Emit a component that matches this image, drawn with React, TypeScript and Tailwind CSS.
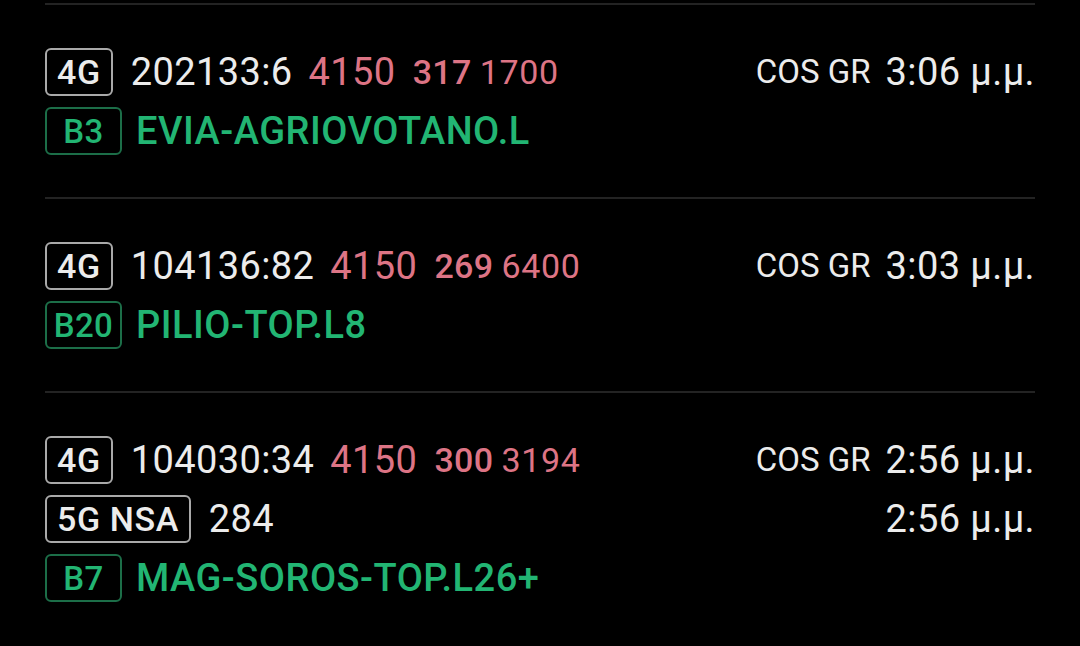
const font = { fontFamily: 'Roboto, "Noto Sans", sans-serif' };

type Cell = {
  ci: string;
  earfcn: string;
  pci: string;
  tac: string;
  band: string;
  name: string;
  time: string;
  nr?: { pci: string };
};

const cells: Cell[] = [
  { ci: '202133:6', earfcn: '4150', pci: '317', tac: '1700', band: 'B3', name: 'EVIA-AGRIOVOTANO.L', time: '3:06 μ.μ.' },
  { ci: '104136:82', earfcn: '4150', pci: '269', tac: '6400', band: 'B20', name: 'PILIO-TOP.L8', time: '3:03 μ.μ.' },
  { ci: '104030:34', earfcn: '4150', pci: '300', tac: '3194', band: 'B7', name: 'MAG-SOROS-TOP.L26+', time: '2:56 μ.μ.', nr: { pci: '284' } },
];

function TechBadge({ label }: { label: string }) {
  return (
    <div className="h-12 px-[10px] flex items-center rounded-[6px] border-2 border-[#a9a9a9] text-[34px] tracking-[0.6px] font-medium text-[#ececec] leading-none">
      {label}
    </div>
  );
}

function BandBadge({ label }: { label: string }) {
  return (
    <div className="h-12 w-[77px] flex items-center justify-center rounded-[6px] border-2 border-[#1c6e48] text-[33px] tracking-[0.4px] font-medium text-[#22b573] leading-none">
      {label}
    </div>
  );
}

function CellEntry({ c }: { c: Cell }) {
  return (
    <div className="pt-[43px] pb-[42px] flex flex-col gap-[11px]">
      <div className="h-12 flex items-center justify-between">
        <div className="flex items-center">
          <TechBadge label="4G" />
          <span className="ml-[18px] text-[38px] tracking-[0.4px] text-[#ececec]">{c.ci}</span>
          <span className="ml-[16px] text-[38px] tracking-[0.4px] text-[#dd7485]">{c.earfcn}</span>
          <span className="ml-[17px] text-[34px] tracking-[0.4px] font-medium text-[#dd7485]">{c.pci}</span>
          <span className="ml-[8px] text-[34px] tracking-[0.6px] text-[#dd7485]">{c.tac}</span>
        </div>
        <div className="flex items-center">
          <span className="text-[33px] text-[#ececec]">COS GR</span>
          <span className="ml-[15px] text-[38px] tracking-[0.4px] text-[#ececec]">{c.time}</span>
        </div>
      </div>
      {c.nr && (
        <div className="h-12 flex items-center justify-between">
          <div className="flex items-center">
            <TechBadge label="5G NSA" />
            <span className="ml-[18px] text-[38px] tracking-[0.4px] text-[#ececec]">{c.nr.pci}</span>
          </div>
          <span className="text-[38px] tracking-[0.4px] text-[#ececec]">{c.time}</span>
        </div>
      )}
      <div className="h-12 flex items-center">
        <BandBadge label={c.band} />
        <span className="ml-[14px] text-[38px] tracking-[0.5px] font-medium text-[#22b573]">{c.name}</span>
      </div>
    </div>
  );
}

export default function App() {
  return (
    <div style={font} className="w-[1080px] h-[646px] bg-black overflow-hidden px-[45px] pt-[3px]">
      {cells.map((c) => (
        <div key={c.ci} className="border-t-2 border-[#232323]">
          <CellEntry c={c} />
        </div>
      ))}
    </div>
  );
}
